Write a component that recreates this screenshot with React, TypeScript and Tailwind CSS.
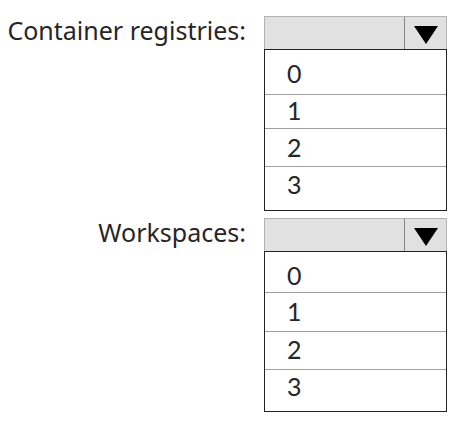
import { useState } from "react";

type Option = { value: string; row: string };
type Field = { id: string; label: string; options: Option[] };

const fields: Field[] = [
  {
    id: "container-registries",
    label: "Container registries:",
    options: [
      { value: "0", row: "h-11 pt-0.5" },
      { value: "1", row: "h-[33px] pb-1" },
      { value: "2", row: "h-[37px] pb-0.5" },
      { value: "3", row: "h-[43px] pb-2.5" },
    ],
  },
  {
    id: "workspaces",
    label: "Workspaces:",
    options: [
      { value: "0", row: "h-10 pt-1.5" },
      { value: "1", row: "h-[38px] pb-0.5" },
      { value: "2", row: "h-[37px] pb-1" },
      { value: "3", row: "h-[41px] pb-2.5" },
    ],
  },
];

function Dropdown({ field }: { field: Field }) {
  const [value, setValue] = useState("");
  return (
    <div className="grid grid-cols-[1fr_183px] items-start gap-x-[18px]">
      <label htmlFor={field.id} className="text-right text-[25px] leading-7 whitespace-nowrap">
        {field.label}
      </label>
      <div>
        <div className="flex h-[33px] border border-b-0 border-[#b4b4b4] bg-[#e1e1e1]">
          <select
            id={field.id}
            value={value}
            onChange={(e) => setValue(e.target.value)}
            className="min-w-0 flex-1 appearance-none bg-transparent px-5 text-2xl outline-none"
          >
            <option value="" />
            {field.options.map((o) => (
              <option key={o.value} value={o.value}>
                {o.value}
              </option>
            ))}
          </select>
          <span className="flex w-[42px] items-center justify-center border-l border-[#858585] pt-1">
            <svg width="24" height="18" viewBox="0 0 24 18" aria-hidden="true">
              <path d="M0 0H24L12 18Z" fill="#000" />
            </svg>
          </span>
        </div>
        <ul className="divide-y divide-[#a0a0a0] border border-[#222222] bg-white font-['Lato',sans-serif]">
          {field.options.map((o) => (
            <li key={o.value}>
              <button
                type="button"
                onClick={() => setValue(o.value)}
                className={`flex w-full items-center px-[22px] text-[25px] leading-7 ${o.row}`}
              >
                {o.value}
              </button>
            </li>
          ))}
        </ul>
      </div>
    </div>
  );
}

export default function App() {
  return (
    <main className="flex min-h-screen flex-col gap-[7px] bg-white pt-4 pr-[26px] font-['Noto_Sans',sans-serif] text-[#262626]">
      {fields.map((field) => (
        <Dropdown key={field.id} field={field} />
      ))}
    </main>
  );
}
